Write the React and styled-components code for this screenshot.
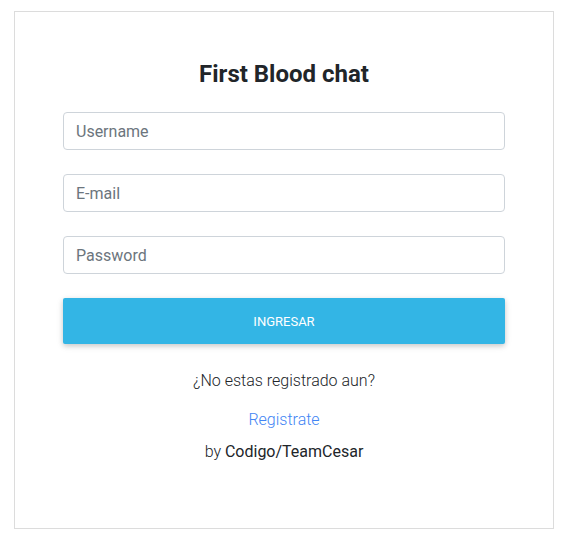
import styled, { createGlobalStyle } from "styled-components";

const GlobalStyle = createGlobalStyle`
  html, body {
    margin: 0;
    padding: 0;
    background: #fff;
    font-family: Roboto, "Liberation Sans", sans-serif;
  }
`;

const Page = styled.div`
  padding: 11px 11px 19px 14px;
`;

const Card = styled.div`
  width: 540px;
  box-sizing: border-box;
  border: 1px solid #dcdcdc;
  padding: 47px 48px 64px;
  display: flex;
  flex-direction: column;
`;

const Title = styled.h1`
  margin: 0 0 23px;
  text-align: center;
  font-size: 24px;
  line-height: 30px;
  font-weight: 700;
  color: #212529;
`;

const Form = styled.form`
  display: flex;
  flex-direction: column;
  gap: 24px;
`;

const Input = styled.input`
  height: 38px;
  box-sizing: border-box;
  border: 1px solid #ced4da;
  border-radius: 4px;
  padding: 0 12px;
  font-family: inherit;
  font-size: 16px;
  color: #495057;
  outline: none;
  &::placeholder {
    color: #6c757d;
  }
`;

const Button = styled.button`
  height: 46px;
  border: none;
  border-radius: 2px;
  background: #33b5e5;
  color: #fff;
  font-family: inherit;
  font-size: 13px;
  font-weight: 400;
  text-transform: uppercase;
  box-shadow: 0 2px 5px rgba(0, 0, 0, 0.16), 0 2px 8px rgba(0, 0, 0, 0.08);
  cursor: pointer;
`;

const Note = styled.p`
  margin: ${(p) => p.$top}px 0 0;
  text-align: center;
  font-size: 16px;
  line-height: 24px;
  font-weight: ${(p) => (p.$light ? 300 : 400)};
  color: ${(p) => p.$color || "#212529"};
`;

const Link = styled.a`
  color: #4285f4;
  font-weight: 300;
  text-decoration: none;
`;

const Strong = styled.span`
  font-weight: 400;
  color: #212529;
`;

export default function App() {
  return (
    <Page>
      <GlobalStyle />
      <Card>
        <Title>First Blood chat</Title>
        <Form onSubmit={(e) => e.preventDefault()}>
          <Input type="text" placeholder="Username" />
          <Input type="email" placeholder="E-mail" />
          <Input type="password" placeholder="Password" />
          <Button type="submit">Ingresar</Button>
        </Form>
        <Note $top={25} $light>¿No estas registrado aun?</Note>
        <Note $top={15}>
          <Link href="#">Registrate</Link>
        </Note>
        <Note $top={8} $light>
          by <Strong>Codigo/TeamCesar</Strong>
        </Note>
      </Card>
    </Page>
  );
}
